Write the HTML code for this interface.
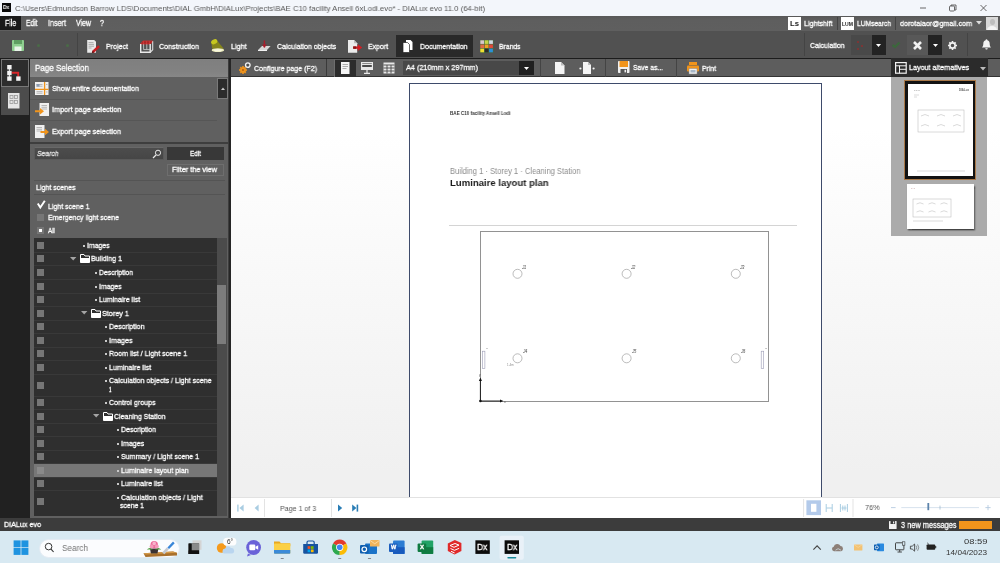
<!DOCTYPE html>
<html><head><meta charset="utf-8"><title>DIALux evo</title>
<style>
*{box-sizing:border-box;margin:0;padding:0}
html,body{width:1000px;height:563px;overflow:hidden;background:#3d3d3d;font-family:"Liberation Sans","DejaVu Sans",sans-serif;font-size:8px;color:#fff}
.a{position:absolute}
.t{position:absolute;white-space:nowrap;transform-origin:0 50%;will-change:transform;-webkit-text-stroke:0.3px}
svg{position:absolute;overflow:visible}
#title{left:0;top:0;width:1000px;height:16px;background:#f3f6fb}
#menu{left:0;top:16px;width:1000px;height:15px;background:linear-gradient(#585858,#5e5e5e 30%,#5f5f5f)}
#tool{left:0;top:31px;width:1000px;height:27.7px;background:#515151;border-bottom:1.9px solid #1c1c1c}
#lcol{left:0;top:58.7px;width:30.4px;height:460px;background:#212121}
#panel{left:30.4px;top:58.7px;width:198.1px;height:460px;background:#606060}
#main{left:228.5px;top:58.7px;width:772px;height:460px;background:linear-gradient(#ffffff 15%,#f0f0f0 90%);border-left:2.1px solid #262626}
#sub{left:230.6px;top:58.7px;width:770px;height:18.2px;background:#5d5d5d;border-bottom:0.8px solid #333}
#status{left:0;top:518.3px;width:1000px;height:13px;background:#3c3c3c}
#task{left:0;top:531.2px;width:1000px;height:32px;background:#d8e9f2}
.cb{position:absolute;left:37px;width:7.4px;height:7.4px;background:#767676}
.ln{position:absolute;left:33.5px;width:183px;height:1px;background:#393939}
.sep{position:absolute;width:1px;background:#444}
</style></head><body>
<div class="a" id="title"></div>
<div class="a" style="left:1.9px;top:3.3px;width:9px;height:8.4px;background:#0a0a0a"></div>
<span class="t" style="left:3.4px;top:3.90px;font-size:5.5px;line-height:7px;height:7px;color:#fff;font-weight:700;transform:scaleX(0.8818);-webkit-text-stroke:0;">Dx</span>
<span class="t" style="left:15px;top:3.80px;font-size:8px;line-height:10px;height:10px;color:#585858;transform:scaleX(0.9610);-webkit-text-stroke:0;">C:\Users\Edmundson Barrow LDS\Documents\DIAL GmbH\DIALux\Projects\BAE C10 facility Ansell 6xLodi.evo* - DIALux evo 11.0  (64-bit)</span>
<svg style="left:0;top:0" width="1000" height="16"><g stroke="#444" stroke-width="0.8" fill="none"><path d="M920 8h6"/><rect x="949.5" y="6" width="5" height="5" rx="1"/><path d="M951 6v-1h5v5h-1"/><path d="M980.5 5l6 6M986.5 5l-6 6"/></g></svg>
<div class="a" id="menu"></div>
<div class="a" style="left:0;top:16px;width:20.6px;height:13.8px;background:#1a1a1a"></div>
<span class="t" style="left:4.8px;top:18.20px;font-size:9px;line-height:11px;height:11px;color:#fff;transform:scaleX(0.7647);">File</span>
<span class="t" style="left:25.8px;top:18.20px;font-size:9px;line-height:11px;height:11px;color:#fff;transform:scaleX(0.7347);">Edit</span>
<span class="t" style="left:48px;top:18.20px;font-size:9px;line-height:11px;height:11px;color:#fff;transform:scaleX(0.7994);">Insert</span>
<span class="t" style="left:76px;top:18.20px;font-size:9px;line-height:11px;height:11px;color:#fff;transform:scaleX(0.7748);">View</span>
<span class="t" style="left:100px;top:18.20px;font-size:9px;line-height:11px;height:11px;color:#fff;transform:scaleX(0.7975);">?</span>
<div class="sep" style="left:837px;top:17px;height:13px;background:#444"></div><div class="sep" style="left:894.5px;top:17px;height:13px;background:#444"></div>
<div class="a" style="left:788px;top:17px;width:13px;height:13px;background:#fff"></div>
<span class="t" style="left:790px;top:19.00px;font-size:7px;line-height:9px;height:9px;color:#222;font-weight:700;transform:scaleX(1.1013);-webkit-text-stroke:0;">Ls</span>
<span class="t" style="left:804px;top:18.80px;font-size:8px;line-height:10px;height:10px;color:#fff;transform:scaleX(0.8898);">Lightshift</span>
<div class="a" style="left:841px;top:17px;width:13px;height:13px;background:#fff"></div>
<span class="t" style="left:842px;top:20.50px;font-size:5px;line-height:6px;height:6px;color:#222;font-weight:700;transform:scaleX(1.0144);-webkit-text-stroke:0;">LUM</span>
<span class="t" style="left:857px;top:18.80px;font-size:8px;line-height:10px;height:10px;color:#fff;transform:scaleX(0.8312);">LUMsearch</span>
<span class="t" style="left:900px;top:18.80px;font-size:8px;line-height:10px;height:10px;color:#fff;transform:scaleX(0.8932);">dorotalaor@gmail.com</span>
<svg style="left:976px;top:21px" width="6" height="4"><path d="M0 0h6l-3 3.5z" fill="#ddd"/></svg>
<div class="a" style="left:986px;top:17px;width:12px;height:13px;background:#d8d8d8;overflow:hidden"><div class="a" style="left:3.5px;top:2px;width:5px;height:6px;border-radius:50%;background:#bdbdbd"></div><div class="a" style="left:1px;top:8.5px;width:10px;height:8px;border-radius:50% 50% 0 0;background:#f4f4f4"></div></div>
<div class="a" id="tool"></div>
<div class="sep" style="left:77px;top:33px;height:23px"></div>
<div class="a" style="left:395.8px;top:35.2px;width:77.4px;height:22px;background:#292929"></div>
<span class="t" style="left:106px;top:41.90px;font-size:8px;line-height:10px;height:10px;color:#fff;transform:scaleX(0.8833);">Project</span>
<span class="t" style="left:159px;top:41.90px;font-size:8px;line-height:10px;height:10px;color:#fff;transform:scaleX(0.8904);">Construction</span>
<span class="t" style="left:230.5px;top:41.90px;font-size:8px;line-height:10px;height:10px;color:#fff;transform:scaleX(0.8929);">Light</span>
<span class="t" style="left:277px;top:41.90px;font-size:8px;line-height:10px;height:10px;color:#fff;transform:scaleX(0.8785);">Calculation objects</span>
<span class="t" style="left:368px;top:41.90px;font-size:8px;line-height:10px;height:10px;color:#fff;transform:scaleX(0.8649);">Export</span>
<span class="t" style="left:420px;top:41.90px;font-size:8px;line-height:10px;height:10px;color:#fff;transform:scaleX(0.8827);">Documentation</span>
<span class="t" style="left:499px;top:41.90px;font-size:8px;line-height:10px;height:10px;color:#fff;transform:scaleX(0.8478);">Brands</span>
<div class="sep" style="left:804px;top:33px;height:23px"></div>
<span class="t" style="left:809.5px;top:40.50px;font-size:8px;line-height:10px;height:10px;color:#fff;transform:scaleX(0.8717);">Calculation</span>
<div class="a" style="left:851.2px;top:34.6px;width:20.4px;height:20.2px;background:#494949"></div>
<div class="a" style="left:871.6px;top:34.6px;width:14px;height:20.2px;background:#232323"></div>
<div class="a" style="left:907px;top:34.6px;width:21px;height:20.2px;background:#585858"></div>
<div class="a" style="left:928px;top:34.6px;width:14px;height:20.2px;background:#232323"></div>
<div class="sep" style="left:967px;top:33px;height:23px"></div>
<div class="a" id="lcol"></div>
<div class="a" style="left:1px;top:59px;width:27.5px;height:27.8px;background:#2d2d2d;border:1px solid #787878"></div>
<div class="a" style="left:1px;top:87px;width:27.5px;height:28px;background:#4c4c4c"></div>
<div class="a" id="panel"></div>
<div class="a" style="left:30.4px;top:58.7px;width:198.1px;height:18.5px;background:linear-gradient(#7f7f7f,#828282 70%,#878787)"></div>
<span class="t" style="left:35px;top:62.50px;font-size:9px;line-height:11px;height:11px;color:#fff;transform:scaleX(0.8919);">Page Selection</span>
<span class="t" style="left:52px;top:83.50px;font-size:8px;line-height:10px;height:10px;color:#fff;transform:scaleX(0.8973);">Show entire documentation</span>
<span class="t" style="left:52px;top:105.00px;font-size:8px;line-height:10px;height:10px;color:#fff;transform:scaleX(0.9085);">Import page selection</span>
<span class="t" style="left:52px;top:126.50px;font-size:8px;line-height:10px;height:10px;color:#fff;transform:scaleX(0.8968);">Export page selection</span>
<div class="a" style="left:217.2px;top:77.8px;width:10.8px;height:21.4px;background:#2c2c2c;border:1px solid #7a7a7a"></div>
<svg style="left:221px;top:87px" width="4" height="3"><path d="M0 3h4l-2-2.5z" fill="#ccc"/></svg>
<div class="a" style="left:30px;top:99px;width:187px;height:1px;background:#565656"></div>
<div class="a" style="left:30px;top:120px;width:187px;height:1px;background:#565656"></div>
<div class="a" style="left:30.4px;top:142.1px;width:198px;height:1.6px;background:#3e3e3e"></div>
<div class="a" style="left:34px;top:146.8px;width:130px;height:13.2px;background:linear-gradient(#4c4c4c,#464646);border:1px solid #5a5a5a;border-top-color:#686868"></div>
<span class="t" style="left:37px;top:149.00px;font-size:8px;line-height:10px;height:10px;color:#e4e4e4;font-style:italic;transform:scaleX(0.8478);">Search</span>
<svg style="left:152px;top:149px" width="10" height="10"><circle cx="6" cy="3.8" r="2.6" fill="none" stroke="#e8e8e8" stroke-width="1"/><path d="M4 6L1 9" stroke="#e8e8e8" stroke-width="1.3"/></svg>
<div class="a" style="left:167px;top:146.8px;width:57.4px;height:13.2px;background:#383838"></div>
<span class="t" style="left:190.2px;top:149.00px;font-size:8px;line-height:10px;height:10px;color:#fff;transform:scaleX(0.7973);">Edit</span>
<div class="a" style="left:167px;top:163.8px;width:57.4px;height:12.6px;background:#5f5f5f;border:1px solid #6e6e6e"></div>
<span class="t" style="left:172.4px;top:165.30px;font-size:8px;line-height:10px;height:10px;color:#fff;transform:scaleX(0.9117);">Filter the view</span>
<div class="a" style="left:34px;top:180px;width:191px;height:1px;background:#545454"></div>
<span class="t" style="left:36px;top:182.50px;font-size:8px;line-height:10px;height:10px;color:#fff;transform:scaleX(0.8793);">Light scenes</span>
<div class="a" style="left:34px;top:194px;width:191px;height:1px;background:#545454"></div>
<svg style="left:37px;top:200px" width="9" height="9"><path d="M0.8 3.6L3.3 7.6L7.8 0.8" fill="none" stroke="#fff" stroke-width="1.9"/></svg>
<span class="t" style="left:48px;top:201.50px;font-size:8px;line-height:10px;height:10px;color:#fff;transform:scaleX(0.8720);">Light scene 1</span>
<div class="cb" style="top:213.8px"></div>
<span class="t" style="left:48px;top:212.60px;font-size:8px;line-height:10px;height:10px;color:#fff;transform:scaleX(0.8772);">Emergency light scene</span>
<div class="cb" style="top:227px"></div><div class="a" style="left:39px;top:229px;width:3px;height:3px;background:#fff"></div>
<span class="t" style="left:48px;top:225.60px;font-size:8px;line-height:10px;height:10px;color:#fff;transform:scaleX(0.7873);">All</span>
<div class="a" style="left:33.5px;top:237.5px;width:183.5px;height:278.4px;background:#2f2f2f"></div>
<div class="a" style="left:216.6px;top:237.5px;width:10.6px;height:278.4px;background:#4b4b4b"></div>
<div class="a" style="left:217.3px;top:284.9px;width:8.9px;height:58.9px;background:#7c7c7c"></div>
<div class="a" style="left:33.5px;top:463.6px;width:183px;height:13px;background:#777777"></div>
<div class="cb" style="top:241.6px;background:#767676"></div>
<div class="a" style="left:83px;top:245px;width:1.5px;height:1.5px;background:#c8c8c8"></div>
<span class="t" style="left:87.4px;top:240.50px;font-size:8px;line-height:10px;height:10px;color:#fff;transform:scaleX(0.8615);">Images</span>
<div class="cb" style="top:255.1px;background:#767676"></div>
<span class="t" style="left:91px;top:254.00px;font-size:8px;line-height:10px;height:10px;color:#fff;transform:scaleX(0.8822);">Building 1</span>
<svg style="left:70px;top:256.9px" width="6.4" height="3.6"><path d="M0 0h6.4l-3.2 3.6z" fill="#a4a4a4"/></svg>
<svg style="left:80px;top:254.0px" width="10" height="9"><path d="M0.5 0.5h3.5l1 1.5h4.5v6.5h-9z" fill="none" stroke="#fff" stroke-width="1"/><path d="M0.5 4h9v4.5h-9z" fill="#fff"/></svg>
<div class="cb" style="top:268.6px;background:#767676"></div>
<div class="a" style="left:95px;top:272px;width:1.5px;height:1.5px;background:#c8c8c8"></div>
<span class="t" style="left:99.4px;top:267.50px;font-size:8px;line-height:10px;height:10px;color:#fff;transform:scaleX(0.8522);">Description</span>
<div class="cb" style="top:282.6px;background:#767676"></div>
<div class="a" style="left:95px;top:286px;width:1.5px;height:1.5px;background:#c8c8c8"></div>
<span class="t" style="left:99.4px;top:281.50px;font-size:8px;line-height:10px;height:10px;color:#fff;transform:scaleX(0.8615);">Images</span>
<div class="cb" style="top:296.1px;background:#767676"></div>
<div class="a" style="left:95px;top:299px;width:1.5px;height:1.5px;background:#c8c8c8"></div>
<span class="t" style="left:99.4px;top:295.00px;font-size:8px;line-height:10px;height:10px;color:#fff;transform:scaleX(0.8719);">Luminaire list</span>
<div class="cb" style="top:309.6px;background:#767676"></div>
<span class="t" style="left:102px;top:308.50px;font-size:8px;line-height:10px;height:10px;color:#fff;transform:scaleX(0.9061);">Storey 1</span>
<svg style="left:81px;top:311.4px" width="6.4" height="3.6"><path d="M0 0h6.4l-3.2 3.6z" fill="#a4a4a4"/></svg>
<svg style="left:91px;top:308.5px" width="10" height="9"><path d="M0.5 0.5h3.5l1 1.5h4.5v6.5h-9z" fill="none" stroke="#fff" stroke-width="1"/><path d="M0.5 4h9v4.5h-9z" fill="#fff"/></svg>
<div class="cb" style="top:323.1px;background:#767676"></div>
<div class="a" style="left:105px;top:326px;width:1.5px;height:1.5px;background:#c8c8c8"></div>
<span class="t" style="left:109.4px;top:322.00px;font-size:8px;line-height:10px;height:10px;color:#fff;transform:scaleX(0.8897);">Description</span>
<div class="cb" style="top:336.6px;background:#767676"></div>
<div class="a" style="left:105px;top:340px;width:1.5px;height:1.5px;background:#c8c8c8"></div>
<span class="t" style="left:109.4px;top:335.50px;font-size:8px;line-height:10px;height:10px;color:#fff;transform:scaleX(0.8996);">Images</span>
<div class="cb" style="top:350.1px;background:#767676"></div>
<div class="a" style="left:105px;top:353px;width:1.5px;height:1.5px;background:#c8c8c8"></div>
<span class="t" style="left:109.4px;top:349.00px;font-size:8px;line-height:10px;height:10px;color:#fff;transform:scaleX(0.8915);">Room list / Light scene 1</span>
<div class="cb" style="top:363.6px;background:#767676"></div>
<div class="a" style="left:105px;top:367px;width:1.5px;height:1.5px;background:#c8c8c8"></div>
<span class="t" style="left:109.4px;top:362.50px;font-size:8px;line-height:10px;height:10px;color:#fff;transform:scaleX(0.8931);">Luminaire list</span>
<div class="cb" style="top:381.6px;background:#767676"></div>
<div class="cb" style="top:399.1px;background:#767676"></div>
<div class="a" style="left:105px;top:402px;width:1.5px;height:1.5px;background:#c8c8c8"></div>
<span class="t" style="left:109.4px;top:398.00px;font-size:8px;line-height:10px;height:10px;color:#fff;transform:scaleX(0.8879);">Control groups</span>
<div class="cb" style="top:412.6px;background:#767676"></div>
<span class="t" style="left:113.5px;top:411.50px;font-size:8px;line-height:10px;height:10px;color:#fff;transform:scaleX(0.8771);">Cleaning Station</span>
<svg style="left:92.5px;top:414.4px" width="6.4" height="3.6"><path d="M0 0h6.4l-3.2 3.6z" fill="#a4a4a4"/></svg>
<svg style="left:102.5px;top:411.5px" width="10" height="9"><path d="M0.5 0.5h3.5l1 1.5h4.5v6.5h-9z" fill="none" stroke="#fff" stroke-width="1"/><path d="M0.5 4h9v4.5h-9z" fill="#fff"/></svg>
<div class="cb" style="top:426.1px;background:#767676"></div>
<div class="a" style="left:117px;top:429px;width:1.5px;height:1.5px;background:#c8c8c8"></div>
<span class="t" style="left:120.9px;top:425.00px;font-size:8px;line-height:10px;height:10px;color:#fff;transform:scaleX(0.8772);">Description</span>
<div class="cb" style="top:439.6px;background:#767676"></div>
<div class="a" style="left:117px;top:443px;width:1.5px;height:1.5px;background:#c8c8c8"></div>
<span class="t" style="left:120.9px;top:438.50px;font-size:8px;line-height:10px;height:10px;color:#fff;transform:scaleX(0.8805);">Images</span>
<div class="cb" style="top:453.1px;background:#767676"></div>
<div class="a" style="left:117px;top:456px;width:1.5px;height:1.5px;background:#c8c8c8"></div>
<span class="t" style="left:120.9px;top:452.00px;font-size:8px;line-height:10px;height:10px;color:#fff;transform:scaleX(0.8826);">Summary / Light scene 1</span>
<div class="cb" style="top:466.6px;background:#8a8a8a"></div>
<div class="a" style="left:117px;top:470px;width:1.5px;height:1.5px;background:#c8c8c8"></div>
<span class="t" style="left:120.9px;top:465.50px;font-size:8px;line-height:10px;height:10px;color:#fff;transform:scaleX(0.8889);">Luminaire layout plan</span>
<div class="cb" style="top:480.1px;background:#767676"></div>
<div class="a" style="left:117px;top:483px;width:1.5px;height:1.5px;background:#c8c8c8"></div>
<span class="t" style="left:120.9px;top:479.00px;font-size:8px;line-height:10px;height:10px;color:#fff;transform:scaleX(0.8825);">Luminaire list</span>
<div class="cb" style="top:498.1px;background:#767676"></div>
<div class="a" style="left:105px;top:380px;width:1.5px;height:1.5px;background:#c8c8c8"></div>
<span class="t" style="left:109.4px;top:376.00px;font-size:8px;line-height:10px;height:10px;color:#fff;transform:scaleX(0.8942);">Calculation objects / Light scene</span>
<span class="t" style="left:108.5px;top:385.00px;font-size:8px;line-height:10px;height:10px;color:#fff;transform:scaleX(0.5614);">1</span>
<div class="a" style="left:117px;top:497px;width:1.5px;height:1.5px;background:#c8c8c8"></div>
<span class="t" style="left:120.9px;top:492.80px;font-size:8px;line-height:10px;height:10px;color:#fff;transform:scaleX(0.8950);">Calculation objects / Light</span>
<span class="t" style="left:120px;top:501.30px;font-size:8px;line-height:10px;height:10px;color:#fff;transform:scaleX(0.8562);">scene 1</span>
<div class="ln" style="top:251.5px"></div>
<div class="ln" style="top:265px"></div>
<div class="ln" style="top:279px"></div>
<div class="ln" style="top:292.5px"></div>
<div class="ln" style="top:306px"></div>
<div class="ln" style="top:319.5px"></div>
<div class="ln" style="top:333px"></div>
<div class="ln" style="top:346.5px"></div>
<div class="ln" style="top:360px"></div>
<div class="ln" style="top:373.5px"></div>
<div class="ln" style="top:396px"></div>
<div class="ln" style="top:409px"></div>
<div class="ln" style="top:422.5px"></div>
<div class="ln" style="top:436px"></div>
<div class="ln" style="top:449.5px"></div>
<div class="ln" style="top:463px"></div>
<div class="ln" style="top:477px"></div>
<div class="ln" style="top:490px"></div>
<div class="a" id="main"></div>
<div class="a" id="sub"></div>
<span class="t" style="left:254px;top:63.80px;font-size:8px;line-height:10px;height:10px;color:#fff;transform:scaleX(0.8800);">Configure page (F2)</span>
<div class="sep" style="left:326px;top:59px;height:18px;background:#3a3a3a"></div>
<div class="a" style="left:334.4px;top:58.9px;width:21.2px;height:17.8px;background:#2c2c2c;border-left:1px solid #6e6e6e;border-top:1px solid #5a5a5a"></div>
<div class="a" style="left:402.6px;top:60.8px;width:131px;height:14.6px;background:#484848"></div>
<div class="a" style="left:519.2px;top:60.8px;width:14.4px;height:14.6px;background:#202020"></div>
<svg style="left:523.6px;top:66.6px" width="5" height="3"><path d="M0 0h5l-2.5 3z" fill="#fff"/></svg>
<span class="t" style="left:406px;top:63.10px;font-size:8px;line-height:10px;height:10px;color:#fff;transform:scaleX(0.9098);">A4 (210mm x 297mm)</span>
<div class="sep" style="left:540px;top:59px;height:18px"></div><div class="sep" style="left:605px;top:59px;height:18px"></div><div class="sep" style="left:676px;top:59px;height:18px"></div>
<span class="t" style="left:633px;top:63.30px;font-size:8px;line-height:10px;height:10px;color:#fff;transform:scaleX(0.8432);">Save as...</span>
<span class="t" style="left:702px;top:64.00px;font-size:8px;line-height:10px;height:10px;color:#fff;transform:scaleX(0.8509);">Print</span>
<div class="a" style="left:891px;top:58px;width:97px;height:19px;background:#2b2b2b"></div>
<span class="t" style="left:909px;top:63.10px;font-size:8px;line-height:10px;height:10px;color:#fff;transform:scaleX(0.8934);">Layout alternatives</span>
<svg style="left:980px;top:66.5px" width="6" height="4"><path d="M0 0h6l-3 3.5z" fill="#bbb"/></svg>
<div class="a" style="left:891.3px;top:77px;width:96px;height:159.4px;background:#ababab"></div>
<div class="a" style="left:903.8px;top:80.2px;width:72.4px;height:99.4px;background:#121212;border:1px solid #a87848"></div>
<div class="a" style="left:907.8px;top:83.9px;width:65.2px;height:92.1px;background:#fff"></div>
<div class="a" style="left:907px;top:184.4px;width:67px;height:44.6px;background:#fff;box-shadow:1px 1.5px 1.5px rgba(0,0,0,.6)"></div>
<div class="a" style="left:408.8px;top:83.2px;width:413px;height:414.3px;background:#fff;border:1.6px solid #3e4b6b;border-bottom:none"></div>
<span class="t" style="left:449.8px;top:111.20px;font-size:4.6px;line-height:6px;height:6px;color:#333;font-weight:700;transform:scaleX(0.9886);-webkit-text-stroke:0;">BAE C10 facility Ansell Lodi</span>
<span class="t" style="left:449.8px;top:165.60px;font-size:8.6px;line-height:11px;height:11px;color:#8c8c8c;transform:scaleX(0.8812);-webkit-text-stroke:0;">Building 1 · Storey 1 · Cleaning Station</span>
<span class="t" style="left:449.8px;top:176.90px;font-size:9.6px;line-height:12px;height:12px;color:#1a1a1a;font-weight:700;transform:scaleX(0.9944);-webkit-text-stroke:0;">Luminaire layout plan</span>
<div class="a" style="left:448.5px;top:225px;width:348px;height:1px;background:#d4d4d4"></div>
<div class="a" style="left:480px;top:231px;width:288.5px;height:170.5px;border:1px solid #929292"></div>
<div class="a" style="left:231px;top:497px;width:769px;height:21px;background:#fff;border-top:1px solid #e2e2e2"></div>
<span class="t" style="left:280.2px;top:503.50px;font-size:8px;line-height:10px;height:10px;color:#555;transform:scaleX(0.8846);-webkit-text-stroke:0;">Page 1 of 3</span>
<span class="t" style="left:865.4px;top:503.40px;font-size:8px;line-height:10px;height:10px;color:#555;transform:scaleX(0.9116);-webkit-text-stroke:0;">76%</span>
<div class="a" id="status"></div>
<span class="t" style="left:4px;top:520.00px;font-size:8px;line-height:10px;height:10px;color:#fff;transform:scaleX(0.8946);">DIALux evo</span>
<span class="t" style="left:900.5px;top:519.50px;font-size:9px;line-height:11px;height:11px;color:#fff;transform:scaleX(0.8217);">3 new messages</span>
<div class="a" style="left:959px;top:521px;width:33px;height:8px;background:#f0941c"></div>
<div class="a" id="task"></div>
<div class="a" style="left:38.5px;top:538.5px;width:141px;height:19px;border-radius:9.5px;background:#fbfcfe;border:0.5px solid #e4ebf3"></div>
<span class="t" style="left:62px;top:542.50px;font-size:9px;line-height:11px;height:11px;color:#737373;transform:scaleX(0.9113);-webkit-text-stroke:0;">Search</span>
<span class="t" style="left:963.5px;top:537.00px;font-size:7.5px;line-height:9px;height:9px;color:#333;transform:scaleX(1.2512);-webkit-text-stroke:0;">08:59</span>
<span class="t" style="left:946px;top:548.00px;font-size:7.5px;line-height:9px;height:9px;color:#333;transform:scaleX(1.0920);-webkit-text-stroke:0;">14/04/2023</span>
<svg style="left:12px;top:40px" width="12" height="11" viewBox="0 0 12 11"><rect x="0" y="0" width="12" height="11" rx="0.8" fill="#8fcf90"/><rect x="2" y="0" width="8" height="4" fill="#5f9f62"/><rect x="2.5" y="6.5" width="7" height="4.5" fill="#e9f5e9"/></svg>
<div class="a" style="left:36.5px;top:44px;width:3px;height:3px;border-radius:50%;background:#4a6b47"></div>
<div class="a" style="left:66px;top:44px;width:3px;height:3px;border-radius:50%;background:#4a6b47"></div>
<svg style="left:87px;top:40px" width="14" height="13" viewBox="0 0 14 13"><path d="M0.2 0h7l1.8 1.8v11h-8.8z" fill="#e9e9e9"/><path d="M1.5 2.6h5M1.5 4.4h5.5M1.5 6.2h5.5M1.5 8h3" stroke="#a4a4a4" stroke-width="0.9"/><path d="M5.6 10.6l5.6-5.4 1.7 1.8-5.6 5.4-2.4 0.6z" fill="#c81e22"/><path d="M5.6 10.6l1.7 1.8-2.4 0.6z" fill="#5a1010"/></svg>
<svg style="left:140px;top:40px" width="14" height="13" viewBox="0 0 14 13"><path d="M0.6 4l2.5-3h9.7l-2.5 3z" fill="#a82626" stroke="#c82c2c" stroke-width="0.9"/><path d="M3.5 1.2v3M6.6 1.2v3M9.6 1.2v3" stroke="#d84040" stroke-width="0.7"/><path d="M0.7 4v8.3h9.5v-8.3" fill="none" stroke="#eaeaea" stroke-width="1.4"/><path d="M10.2 12.3l2.5-2.6v-8.5" fill="none" stroke="#dcdcdc" stroke-width="1.1"/><path d="M3.6 4.2v5.4h6.4M6.8 4.2v5.4" fill="none" stroke="#cfcfcf" stroke-width="0.8"/></svg>
<svg style="left:211px;top:39px" width="14" height="14" viewBox="0 0 14 14"><path d="M0.4 4.6l5.4-3.4 7 8.6h-11.6z" fill="#85851b"/><ellipse cx="6.9" cy="11.2" rx="6.2" ry="1.9" fill="#efeec0"/><ellipse cx="6.9" cy="11.2" rx="4" ry="1" fill="#f8f8e2"/><ellipse cx="3.2" cy="2.7" rx="3.3" ry="2.3" fill="#c6c71f" transform="rotate(-28 3.2 2.7)"/></svg>
<svg style="left:258px;top:40px" width="13" height="12" viewBox="0 0 13 12"><path d="M0 10l4-4h8.6l-3.6 4z" fill="#d6d6d6"/><path d="M0 10h9v1h-9z" fill="#f2f2f2"/><path d="M6.4 0.4v7" stroke="#a81c2a" stroke-width="1.5"/><path d="M4 4.6l2.4 3.2 2.4-3.2z" fill="#a81c2a"/></svg>
<svg style="left:348px;top:40px" width="16" height="13" viewBox="0 0 16 13"><path d="M0 0h6l3.2 3.2v9.6h-9.2z" fill="#ebebeb"/><path d="M6 0v3.2h3.2" fill="#bdbdbd"/><path d="M5.2 6.4h4.6v-2.2l4.4 3.4-4.4 3.4v-2.2h-4.6z" fill="#d41c22"/><path d="M5.2 6.4h3v2.4h-3z" fill="#8a1414"/></svg>
<svg style="left:403px;top:40px" width="10" height="13" viewBox="0 0 10 13"><path d="M3 0h4.5l2 2v8h-6.5z" fill="#fff"/><path d="M0 2.5h4.5l2 2v8h-6.5z" fill="#fff" stroke="#242424" stroke-width="0.7"/></svg>
<svg style="left:480px;top:40px" width="13.5" height="12.6" viewBox="0 0 13.5 12.6"><rect width="13.5" height="12.8" fill="#466a3e"/><rect x="0.3" y="0.3" width="3.8" height="3.6" fill="#d8c6cc"/><rect x="4.7" y="0.3" width="3.8" height="3.6" fill="#c4d648"/><rect x="9.100000000000001" y="0.3" width="3.8" height="3.6" fill="#cfd8e2"/><rect x="0.3" y="4.5" width="3.8" height="3.6" fill="#e06a48"/><rect x="4.7" y="4.5" width="3.8" height="3.6" fill="#f0a020"/><rect x="9.100000000000001" y="4.5" width="3.8" height="3.6" fill="#e04838"/><rect x="0.3" y="8.700000000000001" width="3.8" height="3.6" fill="#f0e030"/><rect x="4.7" y="8.700000000000001" width="3.8" height="3.6" fill="#2c2c2c"/><rect x="9.100000000000001" y="8.700000000000001" width="3.8" height="3.6" fill="#2a90d8"/></svg>
<div class="a" style="left:857px;top:41px;width:2px;height:2px;background:#7a3636"></div><div class="a" style="left:861px;top:44.5px;width:2px;height:2px;background:#7a3636"></div><div class="a" style="left:857px;top:48px;width:2px;height:2px;background:#7a3636"></div>
<svg style="left:876.2px;top:43.8px" width="5" height="3" viewBox="0 0 5 3"><path d="M0 0h5l-2.5 3z" fill="#fff"/></svg>
<svg style="left:932.5px;top:43.8px" width="5" height="3" viewBox="0 0 5 3"><path d="M0 0h5l-2.5 3z" fill="#fff"/></svg>
<svg style="left:891px;top:41px" width="10" height="7" viewBox="0 0 10 7"><path d="M1.5 4l2.5 2 4.5-4.5" fill="none" stroke="#3c673c" stroke-width="2.4"/></svg>
<svg style="left:913px;top:41px" width="9" height="9" viewBox="0 0 9 9"><path d="M1 1l7 7M8 1l-7 7" stroke="#f2f2f2" stroke-width="2.6"/></svg>
<svg style="left:948px;top:41px" width="9" height="9" viewBox="0 0 9 9"><g transform="translate(4.5 4.5)"><circle r="2.6" fill="none" stroke="#f2f2f2" stroke-width="1.6"/><rect x="-0.8" y="-4.5" width="1.6" height="2" fill="#f2f2f2" transform="rotate(0)"/><rect x="-0.8" y="-4.5" width="1.6" height="2" fill="#f2f2f2" transform="rotate(45)"/><rect x="-0.8" y="-4.5" width="1.6" height="2" fill="#f2f2f2" transform="rotate(90)"/><rect x="-0.8" y="-4.5" width="1.6" height="2" fill="#f2f2f2" transform="rotate(135)"/><rect x="-0.8" y="-4.5" width="1.6" height="2" fill="#f2f2f2" transform="rotate(180)"/><rect x="-0.8" y="-4.5" width="1.6" height="2" fill="#f2f2f2" transform="rotate(225)"/><rect x="-0.8" y="-4.5" width="1.6" height="2" fill="#f2f2f2" transform="rotate(270)"/><rect x="-0.8" y="-4.5" width="1.6" height="2" fill="#f2f2f2" transform="rotate(315)"/></g></svg>
<svg style="left:981.5px;top:39px" width="9" height="11" viewBox="0 0 9 11"><path d="M4.5 0.3c0.6 0 0.9 0.4 0.9 0.9c1.6 0.5 2.3 1.8 2.3 3.6c0 2 0.5 2.8 1.3 3.6h-9c0.8-0.8 1.3-1.6 1.3-3.6c0-1.8 0.7-3.1 2.3-3.6c0-0.5 0.3-0.9 0.9-0.9z" fill="#f2f2f2"/><path d="M3.3 9.2h2.4c0 0.8-0.5 1.3-1.2 1.3s-1.2-0.5-1.2-1.3z" fill="#f2f2f2"/></svg>
<svg style="left:7px;top:65px" width="14" height="16" viewBox="0 0 14 16"><path d="M2.4 2v12" stroke="#e8e8e8" stroke-width="1"/><path d="M4.6 7.8h6.6v4" fill="none" stroke="#d8262a" stroke-width="1.9"/><rect x="0.2" y="0" width="4.4" height="4.4" fill="#f4f4f4"/><rect x="0.2" y="5.8" width="4.4" height="4.4" fill="#f4f4f4"/><rect x="0.2" y="11.4" width="4.4" height="4.4" fill="#f4f4f4"/><rect x="9.2" y="11.4" width="4.4" height="4.4" fill="#f4f4f4"/></svg>
<svg style="left:8px;top:93px" width="12" height="16" viewBox="0 0 12 16"><rect width="11.5" height="15.5" fill="#e6e6e6"/><g fill="none" stroke="#9a9a9a" stroke-width="0.8"><rect x="2" y="2.5" width="3" height="3"/><rect x="6.5" y="2.5" width="3" height="3"/><rect x="2" y="7.5" width="3" height="3"/><rect x="6.5" y="7.5" width="3" height="3"/></g></svg>
<svg style="left:35px;top:82px" width="14" height="13" viewBox="0 0 14 13"><rect width="13.5" height="13" fill="#f0f0f0"/><path d="M1.5 2.5h6M1.5 4.2h6M11 2.5h1.5M11 10h1.5M1.5 9.6h6M1.5 11.2h6" stroke="#a8a8a8" stroke-width="0.8"/><rect x="1.5" y="2" width="3" height="2.6" fill="#8a9ab0"/><path d="M0 7.3h13.5M9.6 0v13" stroke="#f0941c" stroke-width="1.3"/></svg>
<svg style="left:34.5px;top:103px" width="14" height="13" viewBox="0 0 14 13"><path d="M4.5 0h9.5v13h-9.5z" fill="#f0f0f0"/><path d="M6.5 2.5h5.5M6.5 4.3h5.5M6.5 6h5.5" stroke="#a8a8a8" stroke-width="0.8"/><path d="M0 7.2h5v-2.2l4 3.2-4 3.2v-2.2h-5z" fill="#f0941c"/></svg>
<svg style="left:34.5px;top:124.5px" width="14" height="13" viewBox="0 0 14 13"><path d="M0 0h9.5v13h-9.5z" fill="#f0f0f0"/><path d="M1.5 2.5h5.5M1.5 4.3h5.5M1.5 6h5.5" stroke="#a8a8a8" stroke-width="0.8"/><path d="M5.5 6h4.5v-2.2l4 3.2-4 3.2v-2.2h-4.5z" fill="#f0941c"/></svg>
<svg style="left:239px;top:61px" width="13" height="13" viewBox="0 0 13 13"><g transform="translate(4 9)"><circle r="2.6" fill="#f0941c"/><rect x="-0.9" y="-3.9" width="1.8" height="2" fill="#f0941c" transform="rotate(0)"/><rect x="-0.9" y="-3.9" width="1.8" height="2" fill="#f0941c" transform="rotate(45)"/><rect x="-0.9" y="-3.9" width="1.8" height="2" fill="#f0941c" transform="rotate(90)"/><rect x="-0.9" y="-3.9" width="1.8" height="2" fill="#f0941c" transform="rotate(135)"/><rect x="-0.9" y="-3.9" width="1.8" height="2" fill="#f0941c" transform="rotate(180)"/><rect x="-0.9" y="-3.9" width="1.8" height="2" fill="#f0941c" transform="rotate(225)"/><rect x="-0.9" y="-3.9" width="1.8" height="2" fill="#f0941c" transform="rotate(270)"/><rect x="-0.9" y="-3.9" width="1.8" height="2" fill="#f0941c" transform="rotate(315)"/><circle r="0.9" fill="#a85a10"/></g><circle cx="8.8" cy="4.1" r="2.3" fill="none" stroke="#f4f4f4" stroke-width="1.3"/><circle cx="8.8" cy="4.1" r="0.7" fill="#333"/></svg>
<svg style="left:341px;top:62px" width="9" height="12" viewBox="0 0 9 12"><path d="M0 0h8.5v12h-8.5z" fill="#f4f4f4"/><path d="M1.5 2.5h5.5M1.5 4.5h5.5M1.5 6.5h4" stroke="#9a9a9a" stroke-width="0.8"/></svg>
<svg style="left:361px;top:62px" width="12" height="12" viewBox="0 0 12 12"><rect x="0" y="0" width="12" height="8" fill="#e8e8e8"/><rect x="1.2" y="3" width="9.6" height="2" fill="#4a4a4a"/><rect x="1.2" y="1" width="9.6" height="1" fill="#8a8a8a"/><path d="M6 8v3M3 11.3h6" stroke="#e8e8e8" stroke-width="1.2"/></svg>
<svg style="left:382.5px;top:62px" width="12" height="12" viewBox="0 0 12 12"><rect x="0.5" y="0.5" width="11" height="11" fill="#e8e8e8"/><path d="M0.5 3h11M0.5 6h11M0.5 9h11M4 3v8.5M8 3v8.5" stroke="#4a4a4a" stroke-width="0.9"/></svg>
<svg style="left:555px;top:62px" width="10" height="12" viewBox="0 0 10 12"><path d="M0 0h6l3.5 3.5v8.5h-9.5z" fill="#f4f4f4"/><path d="M6 0v3.5h3.5" fill="#bdbdbd"/></svg>
<svg style="left:579px;top:62px" width="16" height="12" viewBox="0 0 16 12"><path d="M4 0h5l3 3v9h-8z" fill="#f4f4f4"/><path d="M9 0v3h3" fill="#bdbdbd"/><circle cx="1.4" cy="6.5" r="1.1" fill="#f4f4f4"/><circle cx="14.6" cy="6.5" r="1.1" fill="#f4f4f4"/></svg>
<svg style="left:618px;top:61px" width="12" height="12" viewBox="0 0 12 12"><rect width="11.5" height="12" rx="0.8" fill="#f0f0f0"/><rect x="1.5" y="0" width="8.5" height="6" fill="#f0941c"/><rect x="2.5" y="8" width="6.5" height="4" fill="#555"/><rect x="6.5" y="8.8" width="1.6" height="2.6" fill="#f0f0f0"/></svg>
<svg style="left:687px;top:62px" width="12" height="12" viewBox="0 0 12 12"><rect x="2" y="0" width="8" height="3" fill="#f0941c"/><rect x="0" y="3.5" width="12" height="6" rx="1" fill="#f0941c"/><rect x="2" y="6.5" width="8" height="5.5" fill="#f0f0f0" stroke="#8a8a8a" stroke-width="0.5"/><rect x="3.5" y="8" width="5" height="2.5" fill="#a8b8c8"/></svg>
<svg style="left:894.5px;top:62px" width="12" height="12" viewBox="0 0 12 12"><rect x="0.6" y="0.6" width="10.6" height="10.6" fill="none" stroke="#f2f2f2" stroke-width="1.2"/><path d="M0.6 3.8h10.6M4.5 3.8v7.4M4.5 7.3h6.7" stroke="#f2f2f2" stroke-width="1"/></svg>
<svg style="left:0;top:0" width="1000" height="563" viewBox="0 0 1000 563"><g fill="none" stroke="#979797" stroke-width="0.65"><circle cx="517.5" cy="273.8" r="4.5"/><circle cx="517.5" cy="358.3" r="4.5"/><circle cx="626.6" cy="273.8" r="4.5"/><circle cx="626.6" cy="358.3" r="4.5"/><circle cx="735.8" cy="273.8" r="4.5"/><circle cx="735.8" cy="358.3" r="4.5"/></g><g fill="none" stroke="#9a9ab4" stroke-width="0.6"><rect x="482.4" y="351.2" width="2.5" height="17.2"/><rect x="761.2" y="351.2" width="2.5" height="17.2"/></g><g stroke="#111" stroke-width="0.9" fill="#111"><path d="M480.4 401V380M480.4 401H501" fill="none"/><circle cx="480.4" cy="401" r="1.3" stroke="none"/><path d="M480.4 377.6l-1.5 3.4h3z" stroke="none"/><path d="M503.4 401l-3.4-1.5v3z" stroke="none"/></g></svg>
<span class="t" style="left:522px;top:263.80px;font-size:5.2px;line-height:6px;height:6px;color:#4a4a4a;font-style:italic;transform:scaleX(0.8023);-webkit-text-stroke:0;">J1</span>
<span class="t" style="left:631px;top:263.80px;font-size:5.2px;line-height:6px;height:6px;color:#4a4a4a;font-style:italic;transform:scaleX(0.8023);-webkit-text-stroke:0;">J2</span>
<span class="t" style="left:740px;top:263.80px;font-size:5.2px;line-height:6px;height:6px;color:#4a4a4a;font-style:italic;transform:scaleX(0.8023);-webkit-text-stroke:0;">J3</span>
<span class="t" style="left:522.6px;top:348.20px;font-size:5.2px;line-height:6px;height:6px;color:#4a4a4a;font-style:italic;transform:scaleX(0.8023);-webkit-text-stroke:0;">J4</span>
<span class="t" style="left:631.5px;top:348.20px;font-size:5.2px;line-height:6px;height:6px;color:#4a4a4a;font-style:italic;transform:scaleX(0.8023);-webkit-text-stroke:0;">J5</span>
<span class="t" style="left:740.5px;top:348.20px;font-size:5.2px;line-height:6px;height:6px;color:#4a4a4a;font-style:italic;transform:scaleX(0.8023);-webkit-text-stroke:0;">J6</span>
<span class="t" style="left:507.3px;top:362.80px;font-size:3px;line-height:4px;height:4px;color:#888;transform:scaleX(0.9593);-webkit-text-stroke:0;">1.4m</span>
<span class="t" style="left:485.5px;top:346.70px;font-size:2.5px;line-height:3px;height:3px;color:#777;transform:scaleX(0.6845);-webkit-text-stroke:0;">F1</span>
<span class="t" style="left:764.5px;top:346.70px;font-size:2.5px;line-height:3px;height:3px;color:#777;transform:scaleX(0.6845);-webkit-text-stroke:0;">F2</span>
<span class="t" style="left:478.6px;top:372.50px;font-size:3px;line-height:4px;height:4px;color:#555;transform:scaleX(1.0667);-webkit-text-stroke:0;">y</span>
<span class="t" style="left:504.2px;top:399.80px;font-size:3px;line-height:4px;height:4px;color:#555;transform:scaleX(1.2000);-webkit-text-stroke:0;">x</span>
<svg style="left:0;top:0" width="1000" height="563" viewBox="0 0 1000 563"><g fill="none" stroke="#b4b4b4" stroke-width="0.5"><rect x="918" y="110" width="46" height="22"/><path d="M921 116q4 -3 8 0"/><path d="M921 126q4 -3 8 0"/><path d="M937 116q4 -3 8 0"/><path d="M937 126q4 -3 8 0"/><path d="M953 116q4 -3 8 0"/><path d="M953 126q4 -3 8 0"/><path d="M917 171h48"/><path d="M914 95h5M914 97h3"/><rect x="913" y="199" width="38" height="18"/><path d="M916.5 204q3.5 -2.5 7 0"/><path d="M916.5 212q3.5 -2.5 7 0"/><path d="M928.5 204q3.5 -2.5 7 0"/><path d="M928.5 212q3.5 -2.5 7 0"/><path d="M940.5 204q3.5 -2.5 7 0"/><path d="M940.5 212q3.5 -2.5 7 0"/><path d="M913 221h30"/></g></svg>
<span class="t" style="left:959px;top:87.50px;font-size:2.8px;line-height:4px;height:4px;color:#666;font-weight:700;transform:scaleX(1.0207);-webkit-text-stroke:0;">DIALux</span>
<span class="t" style="left:914px;top:88.50px;font-size:2px;line-height:2px;height:2px;color:#999;transform:scaleX(0.7287);-webkit-text-stroke:0;">BAE C10</span>
<span class="t" style="left:911px;top:187.00px;font-size:2px;line-height:2px;height:2px;color:#caa;transform:scaleX(0.9961);-webkit-text-stroke:0;">BAE</span>
<svg style="left:0;top:0" width="1000" height="563" viewBox="0 0 1000 563"><g fill="#a9cde2"><rect x="237.2" y="504.6" width="1.4" height="7"/><path d="M243.6 504.6v7l-4.2-3.5z"/><path d="M258.6 504.6v7l-4-3.5z"/></g><g fill="#2a7db5"><path d="M338 504.6v7l4.2-3.5z"/><path d="M352.2 504.6v7l4.2-3.5z"/><rect x="356.6" y="504.6" width="1.6" height="7"/></g><g stroke="#dcdcdc" stroke-width="0.8"><path d="M264.5 499v18M331.5 499v18M803.6 499v18M853 499v18"/></g><rect x="806.4" y="500.3" width="14.6" height="14.8" fill="#b3caea"/><rect x="811" y="503.8" width="5.4" height="8" fill="#fff"/><g stroke="#a9cde2" stroke-width="1" fill="none"><path d="M826.2 504v8M832.2 504v8M826.2 508h6"/><path d="M840.4 504v8M847.4 504v8M841.5 508h5M842.8 505.5v5M845 505.5v5"/></g><g stroke="#b5cbe0" stroke-width="0.9"><path d="M891 507.6h4.6"/><path d="M985.4 507.6h5.2M988 505v5.2"/></g><path d="M901.3 507.6H979" stroke="#cddbe8" stroke-width="0.8"/><path d="M940 505.6v4" stroke="#9ab4cc" stroke-width="0.7"/><rect x="927.4" y="503" width="1.8" height="7.2" fill="#5c83ab"/></svg>
<svg style="left:888.5px;top:520.6px" width="8" height="8" viewBox="0 0 8 8"><rect width="7.6" height="8" rx="0.6" fill="#f2f2f2"/><rect x="1.5" y="0" width="4.6" height="3" fill="#3c3c3c"/><rect x="4" y="0.5" width="1.2" height="2" fill="#f2f2f2"/></svg>
<svg style="left:0;top:0" width="1000" height="563" viewBox="0 0 1000 563"><g fill="#1f93e0"><rect x="13.6" y="540.4" width="7" height="6.9"/><rect x="21.4" y="540.4" width="7" height="6.9"/><rect x="13.6" y="548" width="7" height="6.9"/><rect x="21.4" y="548" width="7" height="6.9"/></g><circle cx="48.6" cy="546.6" r="3.3" fill="none" stroke="#333" stroke-width="1"/><path d="M51 549.2l2.6 2.8" stroke="#333" stroke-width="1.1"/><path d="M143.5 553.2l29.5-1.8 4 1.4v2.6l-31.5 1.6z" fill="#a9702c"/><path d="M143.5 553.2l29.5-1.8 4 1.4-31.5 1.8z" fill="#d59a4a"/><path d="M150 548.6h8.4l-0.9 5h-6.6z" fill="#3a3232"/><path d="M146.8 549.6q3.2-3 6 0zM155 549.6q3.2-3 6.2 0z" fill="#4a9a3a"/><circle cx="154.2" cy="544.8" r="3.7" fill="#ee6a9a"/><circle cx="151.6" cy="546.4" r="2" fill="#f49aba"/><circle cx="156.8" cy="546.4" r="2" fill="#f49aba"/><circle cx="154.2" cy="543.4" r="1.8" fill="#f8b4cc"/><path d="M162.2 552.6l4.6-5.2 2 1.8-4.4 5z" fill="#c4c8d0"/><path d="M167.4 547.4l5.6-5.8 1.7 1.7-5.6 5.8z" fill="#3a86d8"/><rect x="192.5" y="540.3" width="9" height="9.5" fill="#d4d4d4"/><rect x="188.6" y="543.5" width="10.5" height="10.5" fill="#1a1a1a"/><rect x="191.5" y="543.5" width="7.6" height="7" fill="#8a8a8a"/><rect x="188.6" y="543.5" width="2.9" height="10.5" fill="#111"/><rect x="188.6" y="550.5" width="10.5" height="3.5" fill="#111"/><circle cx="221.6" cy="548" r="4.8" fill="#f59a1c"/><path d="M225 553.6a2.6 2.6 0 0 1 0.2-5.2a3 3 0 0 1 5.6-0.4a2.8 2.8 0 0 1 1 5.6z" fill="#b9d5ef"/><rect x="223.2" y="537.8" width="13.2" height="7.8" rx="3.9" fill="#fdfdfd"/><circle cx="253.6" cy="547.5" r="7.4" fill="#6a62d8"/><path d="M248 553.5l-1 3 4-1.6z" fill="#6a62d8"/><rect x="249.3" y="544.6" width="6" height="5.6" rx="1.2" fill="#fff"/><path d="M255.6 546.8l2.6-1.6v4.6l-2.6-1.6z" fill="#fff"/><path d="M274 541.5h5.5l1.5 1.8h9.3v3h-16.3z" fill="#e8a820"/><rect x="274" y="543.6" width="16.3" height="10.2" rx="0.8" fill="#fbd045"/><path d="M274 550h16.3v3q0 0.8-0.8 0.8h-14.7q-0.8 0-0.8-0.8z" fill="#3a8ad8"/><rect x="280.6" y="558" width="3.2" height="1.1" rx="0.5" fill="#80868e"/><path d="M303.2 544h14.8v8.6q0 1.2-1.2 1.2h-12.4q-1.2 0-1.2-1.2z" fill="#17539f"/><path d="M307 544v-1.6q0-1.4 1.4-1.4h4.4q1.4 0 1.4 1.4v1.6" fill="none" stroke="#17539f" stroke-width="1.2"/><rect x="307.6" y="546.2" width="2.7" height="2.7" fill="#f25022"/><rect x="310.9" y="546.2" width="2.7" height="2.7" fill="#7fba00"/><rect x="307.6" y="549.5" width="2.7" height="2.7" fill="#00a4ef"/><rect x="310.9" y="549.5" width="2.7" height="2.7" fill="#ffb900"/><path d="M339.7 547.3L333.03 543.45A7.7 7.7 0 0 1 346.37 543.45Z" fill="#e33b2e"/><path d="M339.7 547.3L339.7 555A7.7 7.7 0 0 1 333.03 543.45Z" fill="#2da94f"/><path d="M339.7 547.3L346.37 543.45A7.7 7.7 0 0 1 339.7 555Z" fill="#fbbc05"/><circle cx="339.7" cy="547.3" r="3.6" fill="#fff"/><circle cx="339.7" cy="547.3" r="2.8" fill="#4285f4"/><rect x="338.1" y="558" width="3.2" height="1.1" rx="0.5" fill="#80868e"/><rect x="365" y="543.5" width="12" height="10.5" rx="1" fill="#1a73c8"/><rect x="370" y="540" width="9.5" height="6.6" rx="0.6" fill="#f2b45a"/><path d="M370 540.4l4.75 3.4 4.75-3.4" fill="none" stroke="#fbe2b4" stroke-width="0.8"/><rect x="360" y="545" width="8.6" height="8.6" rx="1" fill="#0f5fb0"/><circle cx="364.3" cy="549.3" r="2.3" fill="none" stroke="#fff" stroke-width="1.2"/><rect x="367.9" y="558" width="3.2" height="1.1" rx="0.5" fill="#80868e"/><rect x="393" y="540.5" width="11.6" height="13.4" rx="1" fill="#2b7cd3"/><rect x="393" y="547.2" width="11.6" height="6.7" fill="#185abd"/><rect x="389" y="543.5" width="8.6" height="8.6" rx="1" fill="#1b5ebe"/><rect x="421.6" y="540.5" width="11.6" height="13.4" rx="1" fill="#21a366"/><rect x="421.6" y="547.2" width="11.6" height="6.7" fill="#107c41"/><rect x="417.6" y="543.5" width="8.6" height="8.6" rx="1" fill="#0f7a40"/><path d="M447.8 543.5l7-3.4 6.6 3v7.8l-6.8 3.6-6.8-3.4z" fill="#e02a2a"/><path d="M450 545.5l5-2 4 1.6-5 2.2zM450.5 548.5l4 1.8 4.6-2M451 551.3l3.6 1.6" stroke="#fff" stroke-width="1" fill="none"/><rect x="475.4" y="540.3" width="14.4" height="13.6" fill="#0c0c0c"/><rect x="499.6" y="535.8" width="24.2" height="24" rx="2" fill="#e9f1f8"/><rect x="504.6" y="540.3" width="14.4" height="13.6" fill="#0c0c0c"/><rect x="507.3" y="557" width="9" height="1.5" rx="0.7" fill="#1a8a9a"/><path d="M813.4 549.6l3.7-3.8 3.7 3.8" fill="none" stroke="#444" stroke-width="1.1"/><path d="M834 551.2a2.3 2.3 0 0 1-0.3-4.5a3.6 3.6 0 0 1 6.8-0.6a2.6 2.6 0 0 1 0.6 5.1z" fill="#8c7f78"/><path d="M835.5 550.2q2.5-3 5.5 0" stroke="#d8e9f2" stroke-width="0.7" fill="none"/><rect x="854" y="544.4" width="8.4" height="6" rx="0.5" fill="#f3c273"/><path d="M854 544.6l4.2 2.8 4.2-2.8" fill="none" stroke="#f8dca8" stroke-width="0.6"/><rect x="877" y="543.4" width="7" height="7.8" rx="0.6" fill="#2a8ae0"/><rect x="874" y="544.6" width="5.6" height="5.6" rx="0.6" fill="#0f5fb0"/><circle cx="876.8" cy="547.4" r="1.5" fill="none" stroke="#fff" stroke-width="0.8"/><rect x="895.5" y="542.8" width="8.4" height="7" rx="0.6" fill="none" stroke="#333" stroke-width="0.9"/><path d="M899.7 549.8v2M897.5 552h4.4" stroke="#333" stroke-width="0.9"/><rect x="902.3" y="541.8" width="2.6" height="3.4" fill="#d8e9f2" stroke="#333" stroke-width="0.6"/><path d="M910.4 546.2h1.8l2.4-2.2v7.2l-2.4-2.2h-1.8z" fill="none" stroke="#333" stroke-width="0.8"/><path d="M916 545.6q1.4 2 0 4M917.6 544.4q2.2 3.2 0 6.4" fill="none" stroke="#666" stroke-width="0.7"/><rect x="926.6" y="544.4" width="8.6" height="5.4" rx="0.8" fill="#222"/><rect x="935.2" y="546" width="1" height="2.2" fill="#222"/><path d="M927.4 543l1.4 1.4" stroke="#222" stroke-width="1"/></svg>
<span class="t" style="left:477.2px;top:541.40px;font-size:9.4px;line-height:12px;height:12px;color:#fff;transform:scaleX(0.9068);">Dx</span>
<span class="t" style="left:506.6px;top:541.40px;font-size:9.4px;line-height:12px;height:12px;color:#fff;transform:scaleX(0.9068);">Dx</span>
<span class="t" style="left:226.8px;top:537.60px;font-size:6.5px;line-height:8px;height:8px;color:#333;transform:scaleX(0.9648);-webkit-text-stroke:0;">6°</span>
<span class="t" style="left:390.8px;top:544.30px;font-size:5.5px;line-height:7px;height:7px;color:#fff;font-weight:700;transform:scaleX(0.9994);">W</span>
<span class="t" style="left:420px;top:544.30px;font-size:5.5px;line-height:7px;height:7px;color:#fff;font-weight:700;transform:scaleX(1.0894);">X</span>
</body></html>
